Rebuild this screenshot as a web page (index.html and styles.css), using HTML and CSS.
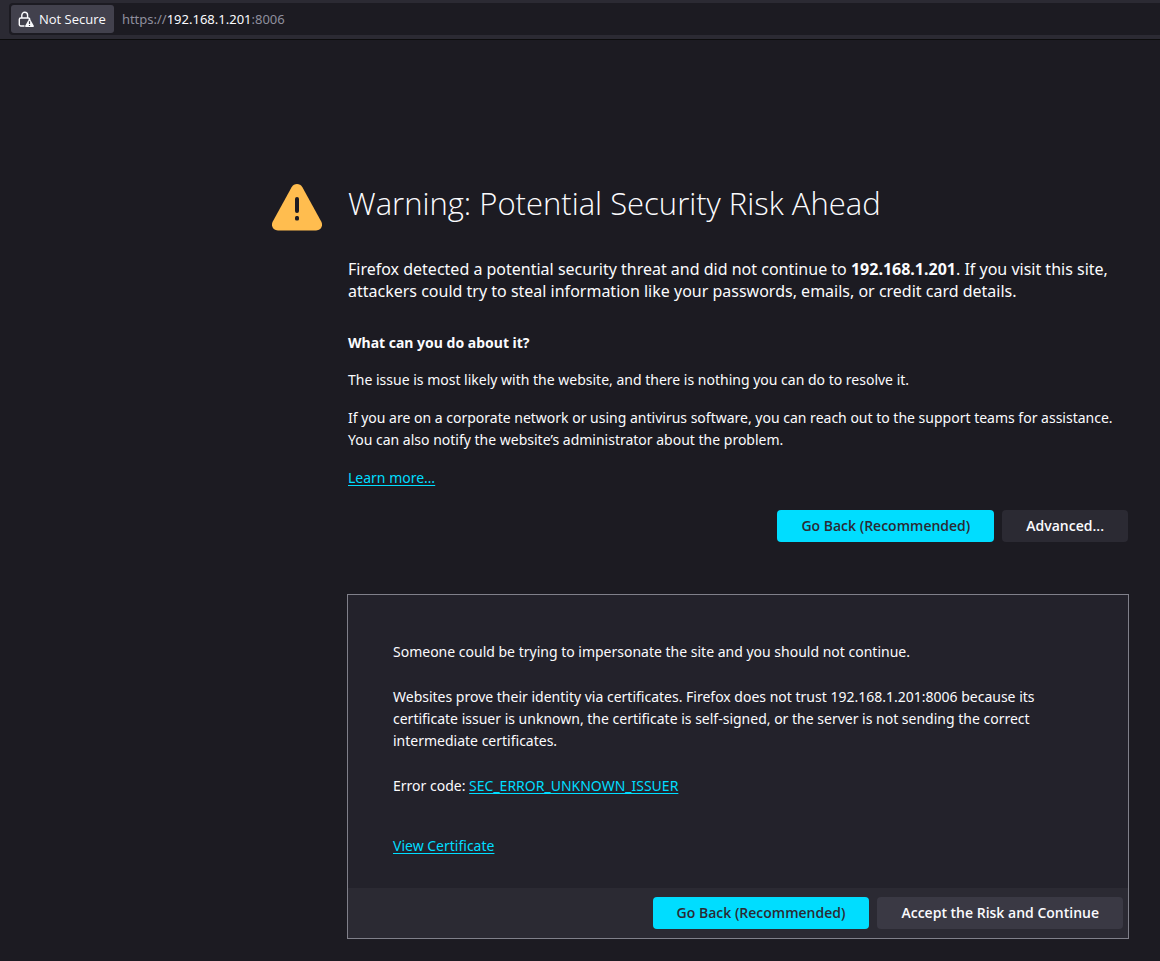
FILE: index.html
```html
<!DOCTYPE html>
<html lang="en">
<head>
<meta charset="utf-8">
<meta name="viewport" content="width=device-width, initial-scale=1">
<title>Warning: Potential Security Risk Ahead</title>
<link rel="stylesheet" href="styles.css">
</head>
<body>
<header class="toolbar">
  <div class="urlbar">
    <button class="identity" type="button">
      <svg class="identity-icon" viewBox="0 0 16 16" aria-hidden="true">
        <path d="M3.800 7V4.200a2.900 2.900 0 0 1 5.800 0V7M6.500 15H2.800A1.500 1.500 0 0 1 1.300 13.500v-5A1.500 1.500 0 0 1 2.800 7h7.700q1 0 1.300 1" fill="none" stroke="currentColor" stroke-width="1.400"/>
        <path d="M10.900 8.200q.6-.9 1.200 0l3.700 6.600q.4 1.200-.8 1.200H8q-1.200 0-.8-1.200z" fill="currentColor"/>
        <path d="M11.500 10.300v2.700M11.500 13.900v1.100" stroke="#42414d" stroke-width="1.200"/>
      </svg>
      <span>Not Secure</span>
    </button>
    <span class="url">https://<span class="url-host">192.168.1.201</span>:8006</span>
  </div>
</header>
<main class="page">
  <svg class="warning-icon" viewBox="0 0 50 48" aria-hidden="true">
    <path d="M19.600 4.200C22 0 28 0 30.400 4.200L49.200 38.500C51.500 42.800 48.800 47.500 44 47.500H6C1.200 47.500-1.500 42.800.8 38.500z" fill="#ffbd4f"/>
    <rect x="23" y="14" width="4" height="16" rx="2" fill="#1c1b22"/>
    <rect x="23" y="33" width="4" height="4.500" rx="1.500" fill="#1c1b22"/>
  </svg>
  <div class="content">
    <h1 class="title">Warning: Potential Security Risk Ahead</h1>
    <p class="lead">Firefox detected a potential security threat and did not continue to <b>192.168.1.201</b>. If you visit this site, attackers could try to steal information like your passwords, emails, or credit card details.</p>
    <section class="advice">
      <h2 class="subtitle">What can you do about it?</h2>
      <p>The issue is most likely with the website, and there is nothing you can do to resolve it.</p>
      <p>If you are on a corporate network or using antivirus software, you can reach out to the support teams for assistance. You can also notify the website’s administrator about the problem.</p>
      <p><a href="#learn">Learn more…</a></p>
    </section>
    <div class="actions">
      <button class="button button-primary" type="button">Go Back (Recommended)</button>
      <button class="button" type="button">Advanced...</button>
    </div>
    <section class="panel">
      <div class="panel-body">
        <p>Someone could be trying to impersonate the site and you should not continue.</p>
        <p>Websites prove their identity via certificates. Firefox does not trust 192.168.1.201:8006 because its certificate issuer is unknown, the certificate is self-signed, or the server is not sending the correct intermediate certificates.</p>
        <p>Error code: <a href="#error">SEC_ERROR_UNKNOWN_ISSUER</a></p>
        <p class="certificate"><a href="#certificate">View Certificate</a></p>
      </div>
      <div class="panel-actions">
        <button class="button button-primary" type="button">Go Back (Recommended)</button>
        <button class="button button-raised" type="button">Accept the Risk and Continue</button>
      </div>
    </section>
  </div>
</main>
</body>
</html>
```
FILE: styles.css
```css
* { box-sizing: border-box; }

body {
  margin: 0;
  background: #1c1b22;
  color: #fbfbfe;
  font: 14px/22px "Noto Sans", "Open Sans", sans-serif;
}

h1, h2, p { margin: 0; }

a { color: #00ddff; text-underline-offset: 2px; }

.toolbar {
  padding: 3px 0 4px 9px;
  background: #2b2a33;
  border-bottom: 1px solid #0c0c0d;
}

.urlbar {
  display: flex;
  align-items: center;
  gap: 8px;
  padding: 2px;
  background: #1c1b22;
  border-radius: 4px 0 0 4px;
  font-size: 13px;
}

.identity {
  display: flex;
  align-items: center;
  gap: 5px;
  height: 28px;
  padding: 0 8px 0 7px;
  border: 0;
  border-radius: 3px;
  background: #42414d;
  color: #fbfbfe;
  font: 13px/22px "Open Sans", "Noto Sans", sans-serif;
}

.identity-icon { width: 16px; height: 16px; }

.url { color: #8f8f9d; }
.url-host { color: #fbfbfe; }

.page {
  display: flex;
  align-items: flex-start;
  gap: 25px;
  padding: 143px 31px 22px 272px;
}

.warning-icon { flex: none; width: 50px; height: 48px; }

.content { flex: 1; min-width: 0; }

.title {
  margin-bottom: 35px;
  padding-left: 1px;
  font-family: "Open Sans", "Noto Sans", sans-serif;
  font-size: 31px;
  font-weight: 300;
  line-height: 40px;
}

.lead { padding-left: 1px; font-size: 16px; }

.advice {
  display: flex;
  flex-direction: column;
  gap: 16px;
  margin-top: 30px;
  padding-left: 1px;
}

.subtitle { font-size: 14px; font-weight: 700; line-height: 21px; }

.actions {
  display: flex;
  justify-content: flex-end;
  gap: 8px;
  margin: 21px 1px 52px 0;
}

.button {
  height: 32px;
  padding: 0 24px;
  border: 0;
  border-radius: 4px;
  background: #2b2a33;
  color: #fbfbfe;
  font: 600 14px/22px "Open Sans", "Noto Sans", sans-serif;
}

.button-primary { background: #00ddff; color: #2b2a33; }
.button-raised { background: #3a3944; }

.panel { border: 1px solid #80808a; background: #23222b; }

.panel-body {
  display: flex;
  flex-direction: column;
  gap: 23px;
  padding: 46px 45px 31px;
}

.certificate { margin-top: 15px; }

.panel-actions {
  display: flex;
  justify-content: flex-end;
  gap: 8px;
  padding: 9px 5px;
  background: #2b2a33;
}
```
